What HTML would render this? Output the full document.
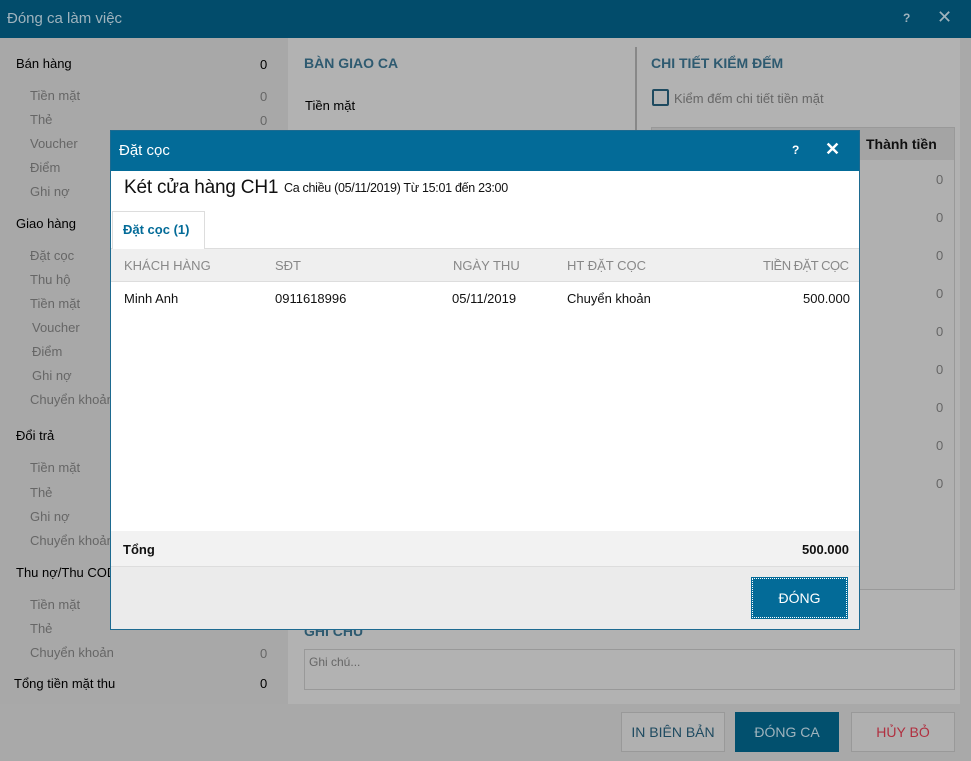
<!DOCTYPE html>
<html><head><meta charset="utf-8"><style>
*{margin:0;padding:0;box-sizing:border-box}
body{width:971px;height:761px;position:relative;overflow:hidden;font-family:"Liberation Sans",sans-serif;font-size:13px;background:#b2b2b2}
.a{position:absolute;white-space:nowrap}
.g{color:#666}
</style></head><body>
<div class="a" style="left:0;top:0;width:971px;height:38px;background:#024c6b"></div>
<div class="a" style="left:7px;top:10px;color:#9fb3bd;font-size:15px">Đóng ca làm việc</div>
<div class="a" style="left:903px;top:11px;color:#9fb3bd;font-size:12px;font-weight:bold">?</div>
<div class="a" style="left:937px;top:7px;color:#9fb3bd;font-size:18px">✕</div>
<div class="a" style="left:0;top:38px;width:288px;height:666px;background:#a8a8a8"></div>
<div class="a" style="left:0;top:704px;width:971px;height:57px;background:#a9a9a9"></div>
<div class="a" style="left:960px;top:38px;width:11px;height:666px;background:#a9a9a9"></div>

<div class="a" style="left:16px;top:56px">Bán hàng</div><div class="a" style="left:260px;top:57px">0</div>
<div class="a g" style="left:30px;top:88px">Tiền mặt</div><div class="a g" style="left:260px;top:89px">0</div>
<div class="a g" style="left:30px;top:112px">Thẻ</div><div class="a g" style="left:260px;top:113px">0</div>
<div class="a g" style="left:30px;top:136px">Voucher</div>
<div class="a g" style="left:30px;top:160px">Điểm</div>
<div class="a g" style="left:30px;top:184px">Ghi nợ</div>
<div class="a" style="left:16px;top:216px">Giao hàng</div>
<div class="a g" style="left:30px;top:248px">Đặt cọc</div>
<div class="a g" style="left:30px;top:272px">Thu hộ</div>
<div class="a g" style="left:30px;top:296px">Tiền mặt</div>
<div class="a g" style="left:32px;top:320px">Voucher</div>
<div class="a g" style="left:32px;top:344px">Điểm</div>
<div class="a g" style="left:32px;top:368px">Ghi nợ</div>
<div class="a g" style="left:30px;top:392px">Chuyển khoản</div>
<div class="a" style="left:16px;top:428px">Đổi trả</div>
<div class="a g" style="left:30px;top:460px">Tiền mặt</div>
<div class="a g" style="left:30px;top:485px">Thẻ</div>
<div class="a g" style="left:30px;top:509px">Ghi nợ</div>
<div class="a g" style="left:30px;top:533px">Chuyển khoản</div>
<div class="a" style="left:16px;top:565px">Thu nợ/Thu COD</div>
<div class="a g" style="left:30px;top:597px">Tiền mặt</div>
<div class="a g" style="left:30px;top:621px">Thẻ</div>
<div class="a g" style="left:30px;top:645px">Chuyển khoản</div><div class="a g" style="left:260px;top:646px">0</div>
<div class="a" style="left:14px;top:676px">Tổng tiền mặt thu</div><div class="a" style="left:260px;top:676px">0</div>

<div class="a" style="left:304px;top:55px;color:#2e5a70;font-weight:bold;font-size:14px">BÀN GIAO CA</div>
<div class="a" style="left:305px;top:98px">Tiền mặt</div>
<div class="a" style="left:635px;top:47px;width:2px;height:85px;background:#888"></div>
<div class="a" style="left:651px;top:55px;color:#2e5a70;font-weight:bold;font-size:14px">CHI TIẾT KIỂM ĐẾM</div>
<div class="a" style="left:652px;top:89px;width:17px;height:17px;border:2px solid #1e4a60;border-radius:2px"></div>
<div class="a g" style="left:674px;top:91px">Kiểm đếm chi tiết tiền mặt</div>
<div class="a" style="left:651px;top:127px;width:304px;height:463px;border:1px solid #999;background:#b0b0b0"></div>
<div class="a" style="left:652px;top:128px;width:302px;height:32px;background:#a4a4a4"></div>
<div class="a" style="left:866px;top:136px;font-weight:bold;font-size:14px;color:#111">Thành tiền</div>
<div class="a g" style="left:936px;top:172px">0</div><div class="a g" style="left:936px;top:210px">0</div><div class="a g" style="left:936px;top:248px">0</div><div class="a g" style="left:936px;top:286px">0</div><div class="a g" style="left:936px;top:324px">0</div><div class="a g" style="left:936px;top:362px">0</div><div class="a g" style="left:936px;top:400px">0</div><div class="a g" style="left:936px;top:438px">0</div><div class="a g" style="left:936px;top:476px">0</div>
<div class="a" style="left:304px;top:623px;color:#2e5a70;font-weight:bold;font-size:14px">GHI CHÚ</div>
<div class="a" style="left:304px;top:649px;width:651px;height:41px;border:1px solid #999"></div>
<div class="a g" style="left:309px;top:655px;font-size:12px">Ghi chú...</div>

<div class="a" style="left:621px;top:712px;width:104px;height:40px;border:1px solid #999;background:#b0b0b0;color:#1e4a60;text-align:center;line-height:38px;font-size:14px">IN BIÊN BẢN</div>
<div class="a" style="left:735px;top:712px;width:104px;height:40px;background:#02506e;color:#9fb3bd;text-align:center;line-height:40px;font-size:14px">ĐÓNG CA</div>
<div class="a" style="left:851px;top:712px;width:104px;height:40px;border:1px solid #999;background:#b0b0b0;color:#b03040;text-align:center;line-height:38px;font-size:14px">HỦY BỎ</div>

<div class="a" style="left:110px;top:130px;width:750px;height:500px;background:#ebebeb;border:1px solid #1d6a90">
<div class="a" style="left:0;top:0;width:748px;height:40px;background:#036b98"></div>
<div class="a" style="left:8px;top:11px;color:#fff;font-size:15px">Đặt cọc</div>
<div class="a" style="left:681px;top:12px;color:#fff;font-size:12px;font-weight:bold">?</div>
<div class="a" style="left:714px;top:8px;color:#fff;font-size:18px;font-weight:bold">✕</div>
<div class="a" style="left:0;top:40px;width:748px;height:360px;background:#fff"></div>
<div class="a" style="left:13px;top:46px;font-size:19px;color:#111;letter-spacing:-0.2px">Két cửa hàng CH1</div>
<div class="a" style="left:173px;top:50px;font-size:12.5px;color:#111;letter-spacing:-0.3px">Ca chiều (05/11/2019) Từ 15:01 đến 23:00</div>
<div class="a" style="left:0;top:117px;width:748px;height:34px;background:#efefef;border-top:1px solid #ddd;border-bottom:1px solid #ddd"></div>
<div class="a" style="left:1px;top:80px;width:93px;height:38px;background:#fff;border:1px solid #ddd;border-bottom:none"></div>
<div class="a" style="left:12px;top:91px;color:#036b98;font-weight:bold;font-size:13px">Đặt cọc (1)</div>
<div class="a" style="left:13px;top:127px;color:#888">KHÁCH HÀNG</div>
<div class="a" style="left:164px;top:127px;color:#888">SĐT</div>
<div class="a" style="left:342px;top:127px;color:#888">NGÀY THU</div>
<div class="a" style="left:456px;top:127px;color:#888">HT ĐẶT CỌC</div>
<div class="a" style="left:652px;top:127px;color:#888;letter-spacing:-0.5px">TIỀN ĐẶT CỌC</div>
<div class="a" style="left:13px;top:160px;color:#111">Minh Anh</div>
<div class="a" style="left:164px;top:160px;color:#111">0911618996</div>
<div class="a" style="left:341px;top:160px;color:#111">05/11/2019</div>
<div class="a" style="left:456px;top:160px;color:#111">Chuyển khoản</div>
<div class="a" style="left:692px;top:160px;color:#111">500.000</div>
<div class="a" style="left:0;top:400px;width:748px;height:36px;background:#f2f2f2;border-bottom:1px solid #ddd"></div>
<div class="a" style="left:12px;top:411px;font-weight:bold;color:#111">Tổng</div>
<div class="a" style="left:691px;top:411px;font-weight:bold;color:#111">500.000</div>
<div class="a" style="left:641px;top:447px;width:95px;height:40px;background:#036b98;border:1px dotted #fff;outline:1px solid #036b98;color:#fff;text-align:center;line-height:38px;font-size:14px">ĐÓNG</div>
</div>
</body></html>
